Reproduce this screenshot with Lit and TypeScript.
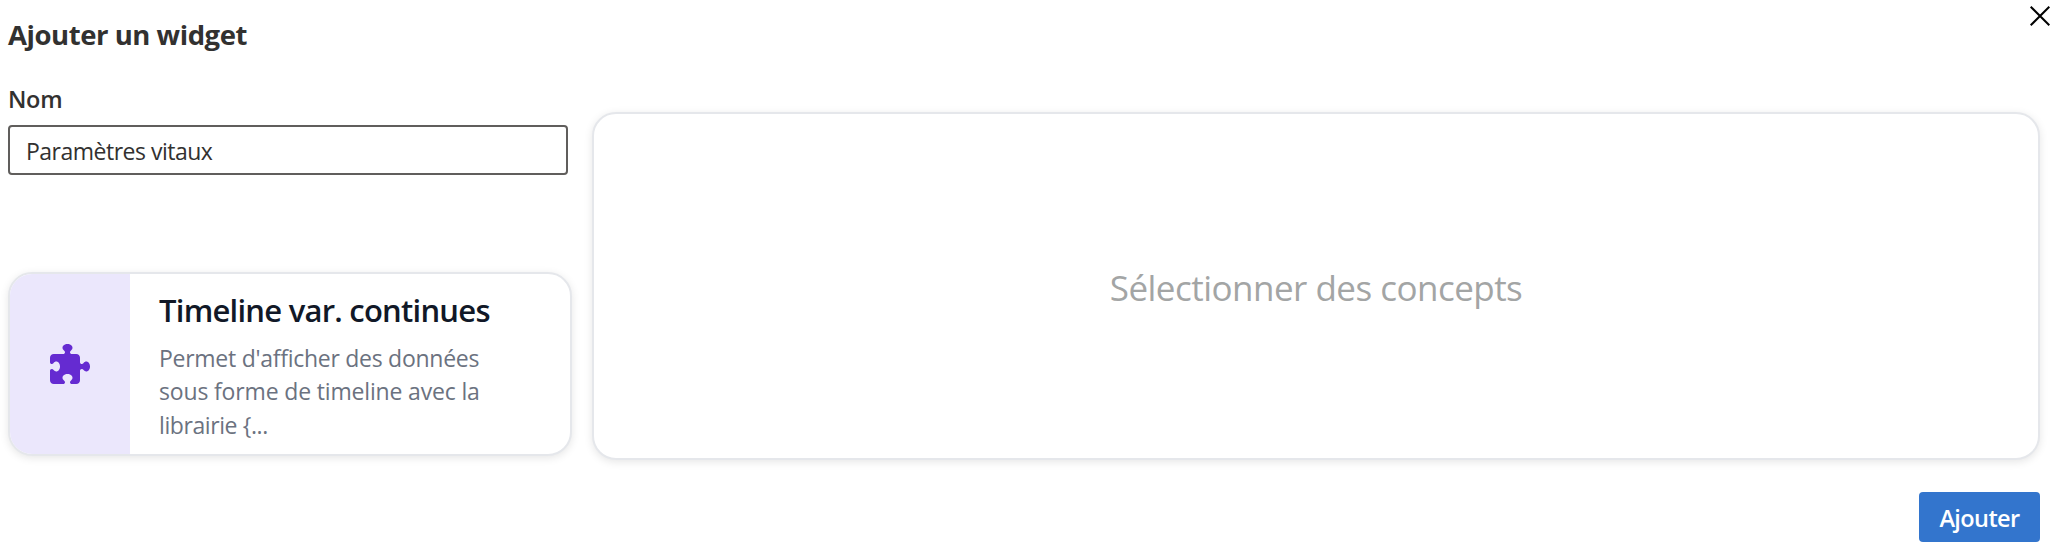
import { LitElement, html, css, svg } from "lit";

const closeIcon = svg`<svg class="close-icon" viewBox="0 0 20 20"><path d="M0.7 0.7 19.3 19.3M19.3 0.7 0.7 19.3" fill="none" stroke="#000" stroke-width="2"/></svg>`;

const puzzleIcon = svg`<svg class="puzzle" viewBox="0 0 512 512" fill="currentColor"><path d="M192 104.8c0-9.2-5.8-17.3-13.2-22.8C167.2 73.3 160 61.3 160 48c0-26.5 28.7-48 64-48s64 21.5 64 48c0 13.3-7.2 25.3-18.8 34c-7.4 5.5-13.2 13.6-13.2 22.8c0 12.8 10.4 23.2 23.2 23.2H336c26.5 0 48 21.5 48 48v56.8c0 12.8 10.4 23.2 23.2 23.2c9.2 0 17.3-5.8 22.8-13.2c8.7-11.6 20.7-18.8 34-18.8c26.5 0 48 28.7 48 64s-21.5 64-48 64c-13.3 0-25.3-7.2-34-18.8c-5.5-7.4-13.6-13.2-22.8-13.2c-12.8 0-23.2 10.4-23.2 23.2V464c0 26.5-21.5 48-48 48H279.2c-12.8 0-23.2-10.4-23.2-23.2c0-9.2 5.8-17.3 13.2-22.8c11.6-8.7 18.8-20.7 18.8-34c0-26.5-28.7-48-64-48s-64 21.5-64 48c0 13.3 7.2 25.3 18.8 34c7.4 5.5 13.2 13.6 13.2 22.8c0 12.8-10.4 23.2-23.2 23.2H48c-26.5 0-48-21.5-48-48V343.2C0 330.4 10.4 320 23.2 320c9.2 0 17.3 5.8 22.8 13.2C54.7 344.8 66.7 352 80 352c26.5 0 48-28.7 48-64s-21.5-64-48-64c-13.3 0-25.3 7.2-34 18.8C40.5 250.2 32.4 256 23.2 256C10.4 256 0 245.6 0 232.8V176c0-26.5 21.5-48 48-48H168.8c12.8 0 23.2-10.4 23.2-23.2z"/></svg>`;

class AppRoot extends LitElement {
  static styles = css`
    :host {
      display: block;
      height: 554px;
      box-sizing: border-box;
      overflow: hidden;
      background: #fff;
      color: #323130;
      font-family: "Open Sans", "Noto Sans", sans-serif;
      padding: 6px 8px 0;
    }
    * { box-sizing: border-box; }
    .header {
      display: flex;
      justify-content: space-between;
      align-items: flex-start;
      height: 77px;
    }
    .title {
      margin: 11px 0 0;
      font-size: 27.5px;
      font-weight: 700;
      line-height: 36px;
      letter-spacing: -0.45px;
    }
    .close {
      display: flex;
      border: 0;
      padding: 0;
      background: none;
    }
    .close-icon { width: 20px; height: 20px; display: block; }
    .body {
      display: grid;
      grid-template-columns: 564px 1448px;
      column-gap: 20px;
      margin-right: 10px;
    }
    .left { display: flex; flex-direction: column; }
    .label {
      font-size: 23.5px;
      font-weight: 600;
      line-height: 32px;
      letter-spacing: -0.3px;
      margin-bottom: 10px;
    }
    .field {
      width: 560px;
      height: 50px;
      border: 2px solid #605e5c;
      border-radius: 4px;
      padding: 2px 16px 0;
      background: #fff;
      color: #323130;
      font-family: inherit;
      font-size: 23px;
      letter-spacing: -0.5px;
      outline: none;
    }
    .card, .panel {
      border: 2px solid #e5e7eb;
      border-radius: 24px;
      background: #fff;
      box-shadow: 0 2px 8px rgba(0, 0, 0, 0.1);
    }
    .card {
      display: flex;
      height: 184px;
      margin-top: 97px;
      overflow: hidden;
    }
    .badge {
      flex: 0 0 120px;
      display: flex;
      align-items: center;
      justify-content: center;
      background: #ebe7fc;
      color: #652bd1;
    }
    .puzzle { width: 40px; height: 40px; display: block; }
    .info { padding: 18px 0 0 29px; }
    .name {
      color: #111827;
      font-size: 31px;
      font-weight: 600;
      line-height: 36px;
      letter-spacing: -0.76px;
      white-space: nowrap;
    }
    .desc {
      margin-top: 13.9px;
      color: #6b7280;
      font-size: 23px;
      line-height: 33.6px;
      white-space: nowrap;
    }
    .line { display: block; letter-spacing: -0.16px; }
    .line:first-child { letter-spacing: -0.27px; }
    .line:last-child { letter-spacing: -0.41px; }
    .panel {
      margin-top: 29px;
      height: 348px;
      display: flex;
      align-items: center;
      justify-content: center;
      color: #a3a5a5;
      font-size: 35px;
      letter-spacing: -0.52px;
      padding-top: 2px;
    }
    .footer {
      display: flex;
      justify-content: flex-end;
      margin: 32px 10px 0 0;
    }
    .submit {
      width: 121px;
      height: 50px;
      border: 0;
      border-radius: 4px;
      padding: 2px 0 0;
      background: #3375cd;
      color: #fff;
      font-family: inherit;
      font-size: 23.5px;
      font-weight: 600;
      letter-spacing: -0.6px;
    }
  `;

  render() {
    return html`
      <div class="header">
        <h1 class="title">Ajouter un widget</h1>
        <button class="close" aria-label="Fermer">${closeIcon}</button>
      </div>
      <div class="body">
        <div class="left">
          <label class="label" for="name">Nom</label>
          <input class="field" id="name" .value=${"Paramètres vitaux"} />
          <div class="card">
            <div class="badge">${puzzleIcon}</div>
            <div class="info">
              <div class="name">Timeline var. continues</div>
              <div class="desc">
                <span class="line">Permet d'afficher des données</span>
                <span class="line">sous forme de timeline avec la</span>
                <span class="line">librairie {...</span>
              </div>
            </div>
          </div>
        </div>
        <div class="panel">Sélectionner des concepts</div>
      </div>
      <div class="footer"><button class="submit">Ajouter</button></div>
    `;
  }
}
customElements.define("app-root", AppRoot);
